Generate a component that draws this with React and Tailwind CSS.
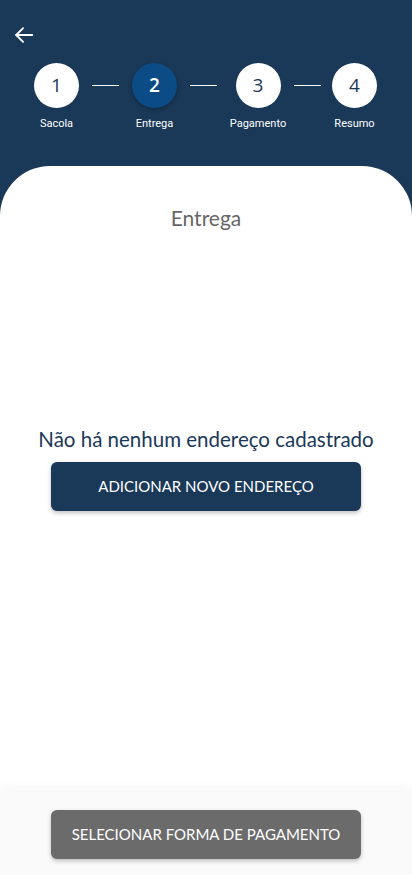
import React from "react";

function Step({ n, label, active, w }) {
  return (
    <div className={`flex flex-col items-center ${w}`}>
      <div
        className={`w-[45px] h-[45px] rounded-full flex items-center justify-center text-[19px] ${
          active ? "bg-[#0b4c86] text-white font-semibold shadow-[0_2px_4px_rgba(0,0,0,0.25)]" : "bg-white text-[#1a3858]"
        }`}
        style={{ fontFamily: "'Open Sans', sans-serif" }}
      >
        {n}
      </div>
      <div className="mt-[9px] text-[11px] leading-[14px] text-white whitespace-nowrap" style={{ fontFamily: "Roboto, sans-serif" }}>
        {label}
      </div>
    </div>
  );
}

function Line({ cls }) {
  return <div className={`h-px w-[27px] bg-white mt-[22px] ${cls}`} />;
}

export default function App() {
  return (
    <div className="w-[412px] h-[875px] bg-[#1a3858] flex flex-col overflow-hidden" style={{ fontFamily: "Lato, 'Noto Sans', sans-serif" }}>
      <div className="h-[166px] shrink-0 flex flex-col">
        <div className="pl-[13px] pt-[24px] h-[63px]">
          <svg width="22" height="22" viewBox="0 0 24 24" fill="none" stroke="white" strokeWidth="2" strokeLinecap="round" strokeLinejoin="round">
            <path d="M21 12H3.5" />
            <path d="M11 4.5 3.5 12l7.5 7.5" />
          </svg>
        </div>
        <div className="flex items-start pl-[34px]">
          <Step n="1" label="Sacola" w="w-[45px]" />
          <Line cls="mx-[13px]" />
          <Step n="2" label="Entrega" active w="w-[45px]" />
          <Line cls="mx-[13px]" />
          <Step n="3" label="Pagamento" w="w-[56px]" />
          <Line cls="ml-[8px] mr-[11px]" />
          <Step n="4" label="Resumo" w="w-[45px]" />
        </div>
      </div>
      <div className="flex-1 bg-white rounded-t-[50px] flex flex-col">
        <div className="pt-[39px] text-center text-[21px] leading-[26px] text-[#666666]">Entrega</div>
        <div className="flex-1 flex flex-col items-center pt-[195px]">
          <div className="text-[20.5px] leading-[26px] text-[#1a3858] whitespace-nowrap">Não há nenhum endereço cadastrado</div>
          <button className="mt-[10px] w-[310px] h-[49px] rounded-[6px] bg-[#1a3858] text-white text-[15px] shadow-[0_2px_4px_rgba(0,0,0,0.25)]">
            ADICIONAR NOVO ENDEREÇO
          </button>
        </div>
        <div className="h-[83px] bg-[#fafafa] shadow-[0_-4px_12px_rgba(0,0,0,0.04)] flex justify-center pt-[18px]">
          <button className="w-[310px] h-[49px] rounded-[6px] bg-[#6b6b6b] text-white text-[15px] shadow-[0_2px_4px_rgba(0,0,0,0.25)]">
            SELECIONAR FORMA DE PAGAMENTO
          </button>
        </div>
      </div>
    </div>
  );
}
